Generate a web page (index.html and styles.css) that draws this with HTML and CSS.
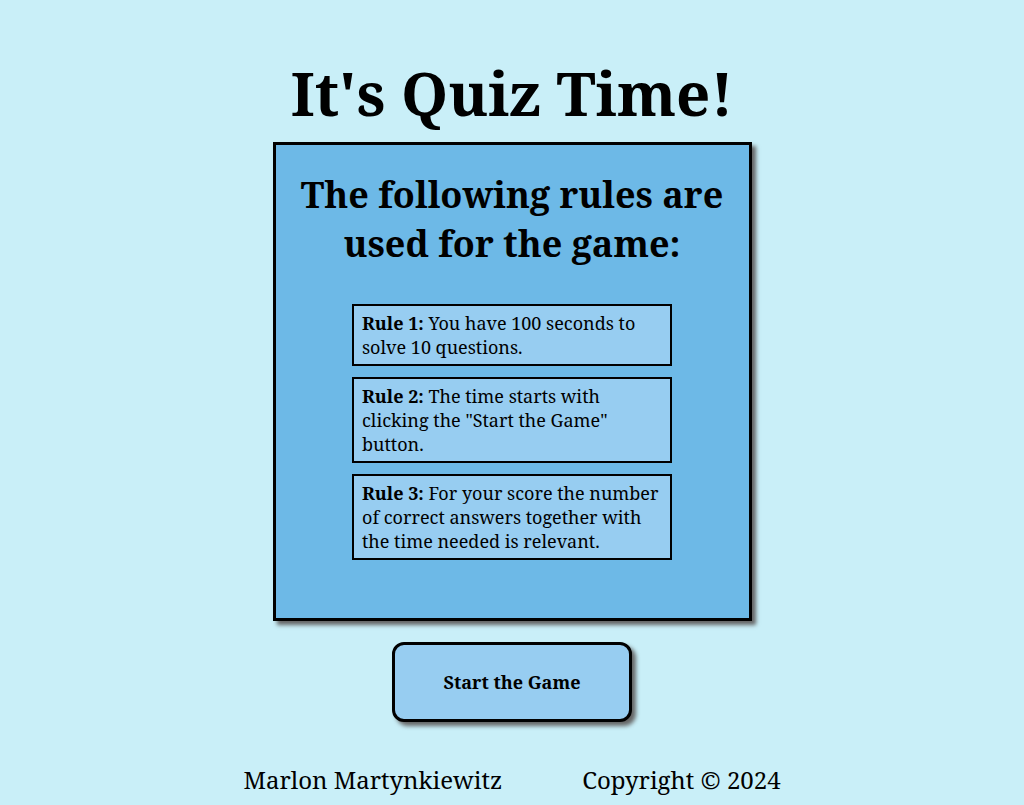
FILE: index.html
```html
<!DOCTYPE html>
<html lang="en">
<head>
<meta charset="utf-8">
<title>Quiz</title>
<link rel="stylesheet" href="styles.css">
</head>
<body>
<main class="page">
  <h1 class="title">It's Quiz Time!</h1>
  <section class="card">
    <h2 class="card-title">The following rules are used for the game:</h2>
    <ul class="rules">
      <li class="rule"><strong>Rule 1:</strong> You have 100 seconds to solve 10 questions.</li>
      <li class="rule"><strong>Rule 2:</strong> The time starts with clicking the "Start the Game" button.</li>
      <li class="rule"><strong>Rule 3:</strong> For your score the number of correct answers together with the time needed is relevant.</li>
    </ul>
  </section>
  <button class="start">Start the Game</button>
  <footer class="footer">
    <span>Marlon Martynkiewitz</span>
    <span>Copyright © 2024</span>
  </footer>
</main>
</body>
</html>
```
FILE: styles.css
```css
html, body {
  margin: 0;
  padding: 0;
}
body {
  background: #c9eff8;
  font-family: "Noto Serif", "DejaVu Serif", serif;
  color: #000;
}
.page {
  display: flex;
  flex-direction: column;
  align-items: center;
  padding-top: 57px;
}
.title {
  margin: 0;
  font-size: 60px;
  line-height: 72px;
  font-weight: 700;
}
.card {
  margin-top: 13px;
  width: 473px;
  height: 473px;
  background: #6db9e7;
  border: 3px solid #000;
  box-shadow: 4px 4px 4px #666;
  display: flex;
  flex-direction: column;
  align-items: center;
}
.card-title {
  margin: 25px 20px 0;
  font-size: 36px;
  line-height: 49px;
  text-align: center;
  font-weight: 700;
}
.rules {
  list-style: none;
  margin: 36px 0 0;
  padding: 0;
  display: flex;
  flex-direction: column;
  gap: 11px;
}
.rule {
  width: 300px;
  background: #97cdf1;
  border: 2px solid #000;
  padding: 5px 8px;
  font-size: 18px;
  line-height: 24px;
}
.start {
  margin-top: 21px;
  width: 240px;
  height: 80px;
  background: #97cdf1;
  border: 3px solid #000;
  border-radius: 12px;
  box-shadow: 4px 4px 4px #666;
  font-family: inherit;
  font-weight: 700;
  font-size: 18px;
  color: #000;
}
.footer {
  margin-top: 38px;
  display: flex;
  gap: 80px;
  font-size: 24px;
  line-height: 40px;
}
```
